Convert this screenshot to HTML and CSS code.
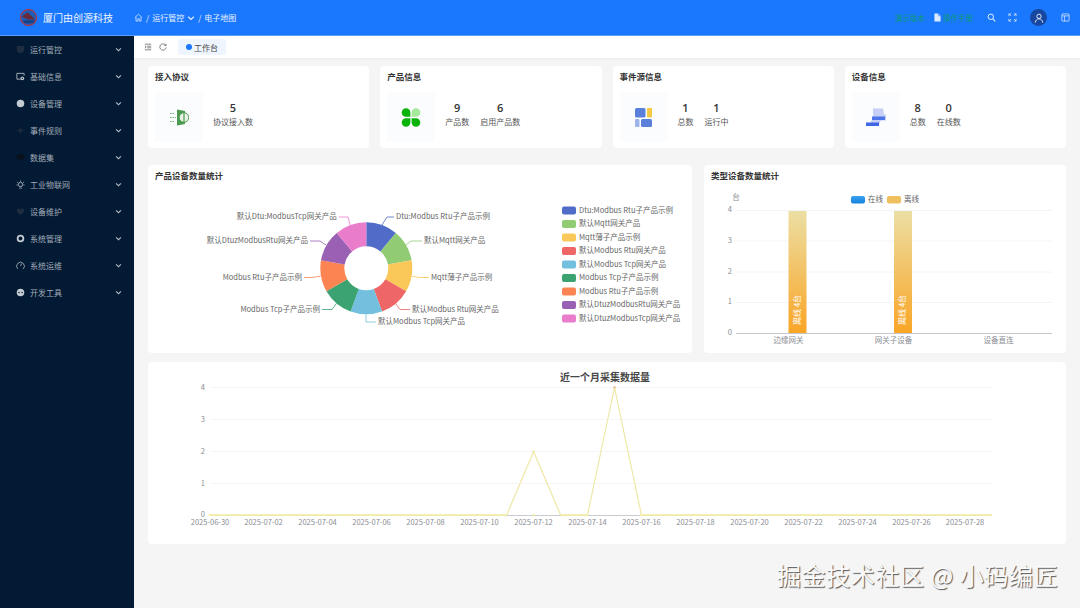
FILE: index.html
```html
<!DOCTYPE html>
<html lang="zh-CN">
<head>
    <meta charset="UTF-8">
    <meta name="viewport" content="width=device-width, initial-scale=1.0">
    <title>工作台</title>
    <link rel="stylesheet" href="styles.css">
</head>
<body>

<svg class="sprites" width="0" height="0">
    <symbol id="chevron" viewBox="0 0 8 8"><path d="M1.2 2.8 4 5.4l2.8-2.6" fill="none" stroke="currentColor" stroke-width="1.2"/></symbol>
</svg>

<header class="topbar">
    <div class="brand">
        <svg class="logo" viewBox="0 0 20 20">
            <circle cx="10" cy="10" r="8.4" fill="#1c5fb8" stroke="#a5394f" stroke-width="1.4"/>
            <path d="M3 9 9 4.5l8 7.5H9z" fill="#6b2a3a"/>
            <path d="M4 13h13l-2 3H6z" fill="#16418a"/>
        </svg>
        <span class="brand-name">厦门由创源科技</span>
    </div>
    <nav class="crumbs">
        <svg class="crumb-home" viewBox="0 0 10 10"><path d="M1 5 5 1.4 9 5M2.2 4.4V9h2V6.4h1.6V9h2V4.4" fill="none" stroke="currentColor" stroke-width=".8"/></svg>
        <span>/</span>
        <span>运行管控</span>
        <svg class="crumb-arrow"><use href="#chevron"/></svg>
        <span>/</span>
        <span>电子地图</span>
    </nav>
    <div class="top-tools">
        <span class="top-link version">演示版本</span>
        <span class="manual">
            <svg class="tool-doc" viewBox="0 0 8 10"><path d="M.5.5h4.5l2.5 2.5v6.500h-7z" fill="#dcebff"/><path d="M5 .5v2.500h2.500" fill="none" stroke="#1a78ff" stroke-width=".7"/></svg>
            <span class="top-link">操作手册</span>
        </span>
        <svg class="tool-icon tool-search" viewBox="0 0 10 10"><circle cx="4.200" cy="4.200" r="3" fill="none" stroke="currentColor" stroke-width="1.100"/><path d="m6.500 6.500 2.700 2.700" stroke="currentColor" stroke-width="1.200"/></svg>
        <svg class="tool-icon tool-full" viewBox="0 0 10 10"><path d="M1 3.500V1h2.500M6.500 1H9v2.500M9 6.500V9H6.500M3.500 9H1V6.500M1 1l2.200 2.200M9 1 6.800 3.200M9 9 6.800 6.800M1 9l2.200-2.200" fill="none" stroke="currentColor" stroke-width=".8"/></svg>
        <span class="avatar">
            <svg viewBox="0 0 12 12"><circle cx="6" cy="4" r="2.600" fill="none" stroke="#fff" stroke-width="1"/><path d="M1.500 11.500C2 8.500 3.800 7 6 7s4 1.500 4.500 4.500" fill="none" stroke="#fff" stroke-width="1"/></svg>
        </span>
        <svg class="tool-icon tool-layout" viewBox="0 0 10 10"><rect x="1" y="1" width="8" height="8" rx="1" fill="none" stroke="currentColor" stroke-width=".8"/><path d="M1 3.200h8M4 3.200V9" stroke="currentColor" stroke-width=".8"/></svg>
    </div>
</header>

<div class="layout">
    <aside class="sidebar">
        <a class="menu-item">
            <svg class="menu-icon dim" viewBox="0 0 10 10"><path d="M1 1h8v6L5 9.500 1 7z" fill="currentColor"/></svg>
            <span>运行管控</span><svg class="menu-arrow"><use href="#chevron"/></svg>
        </a>
        <a class="menu-item">
            <svg class="menu-icon" viewBox="0 0 10 10"><path d="M5 8H1V1.500h8V4" fill="none" stroke="currentColor" stroke-width=".9"/><circle cx="7" cy="7" r="2.100" fill="currentColor"/><circle cx="7" cy="7" r=".8" fill="#021a33"/></svg>
            <span>基础信息</span><svg class="menu-arrow"><use href="#chevron"/></svg>
        </a>
        <a class="menu-item">
            <svg class="menu-icon" viewBox="0 0 10 10"><circle cx="5" cy="5" r="4.200" fill="currentColor"/></svg>
            <span>设备管理</span><svg class="menu-arrow"><use href="#chevron"/></svg>
        </a>
        <a class="menu-item">
            <svg class="menu-icon dim" viewBox="0 0 10 10"><path d="m5 .5 1 3.500 3.500 1-3.500 1L5 9.500 4 6 .5 5 4 4z" fill="currentColor"/></svg>
            <span>事件规则</span><svg class="menu-arrow"><use href="#chevron"/></svg>
        </a>
        <a class="menu-item">
            <svg class="menu-icon darker" viewBox="0 0 10 10"><ellipse cx="5" cy="4.500" rx="4.500" ry="3" fill="currentColor"/></svg>
            <span>数据集</span><svg class="menu-arrow"><use href="#chevron"/></svg>
        </a>
        <a class="menu-item">
            <svg class="menu-icon" viewBox="0 0 10 10"><circle cx="5" cy="5" r="2.400" fill="none" stroke="currentColor" stroke-width=".9"/><path d="M5 .5v1.300M1 2l1.100 1M9 2 7.900 3M.5 5.500h1.300M8.200 5.500h1.300M3.500 9h3" stroke="currentColor" stroke-width=".8"/></svg>
            <span>工业物联网</span><svg class="menu-arrow"><use href="#chevron"/></svg>
        </a>
        <a class="menu-item">
            <svg class="menu-icon dim" viewBox="0 0 10 10"><path d="M1 3.500C1 1.500 4 1 5 3c1-2 4-1.500 4 .5C9 6 6.500 8 5 9 3.500 8 1 6 1 3.500z" fill="currentColor"/></svg>
            <span>设备维护</span><svg class="menu-arrow"><use href="#chevron"/></svg>
        </a>
        <a class="menu-item">
            <svg class="menu-icon" viewBox="0 0 10 10"><circle cx="5" cy="5" r="3.200" fill="none" stroke="currentColor" stroke-width="2"/></svg>
            <span>系统管理</span><svg class="menu-arrow"><use href="#chevron"/></svg>
        </a>
        <a class="menu-item">
            <svg class="menu-icon" viewBox="0 0 10 10"><path d="M2 8.800a4.300 4.300 0 1 1 6 0M5 5.500l1.200-2.500" fill="none" stroke="currentColor" stroke-width=".8"/></svg>
            <span>系统运维</span><svg class="menu-arrow"><use href="#chevron"/></svg>
        </a>
        <a class="menu-item">
            <svg class="menu-icon" viewBox="0 0 10 10"><circle cx="5" cy="5" r="4.200" fill="currentColor"/><circle cx="3.300" cy="5" r=".8" fill="#021a33"/><circle cx="6.700" cy="5" r=".8" fill="#021a33"/></svg>
            <span>开发工具</span><svg class="menu-arrow"><use href="#chevron"/></svg>
        </a>
    </aside>

    <main class="workspace">
        <div class="tabbar">
            <svg class="tab-tool" viewBox="0 0 10 10"><path d="M1 1.500h8M4 4h5M4 6h5M1 8.500h8M1 3.500 2.800 5 1 6.500" fill="none" stroke="#444" stroke-width=".8"/></svg>
            <svg class="tab-tool" viewBox="0 0 10 10"><path d="M8.500 3A4 4 0 1 0 9 5.500M8.800 1v2.200H6.600" fill="none" stroke="#444" stroke-width=".8"/></svg>
            <div class="tab"><i class="tab-dot"></i>工作台</div>
        </div>

        <div class="content">
            <section class="stat-row">
                <div class="card">
                    <div class="card-title">接入协议</div>
                    <div class="stat-body">
                        <div class="tile">
                            <svg class="tile-icon" viewBox="0 0 20 18">
                                <path d="M8 1l8 1.500v13L8 17z" fill="#4b9a4f"/>
                                <circle cx="15" cy="9" r="4.800" fill="#e8f3e6" stroke="#4b9a4f" stroke-width="1"/>
                                <path d="M15 4.500v9" stroke="#4b9a4f" stroke-width="1.200"/>
                                <path d="M1 5h5M1 9h6M1 13h5" stroke="#6fb573" stroke-width="1" stroke-dasharray="1.500 1"/>
                            </svg>
                        </div>
                        <div class="stat"><b>5</b><span>协议接入数</span></div>
                    </div>
                </div>
                <div class="card">
                    <div class="card-title">产品信息</div>
                    <div class="stat-body">
                        <div class="tile">
                            <svg class="tile-icon" viewBox="0 0 18 18">
                                <path d="M8.400 8.400H4.200a4.100 4.100 0 1 1 4.200-4.200z" fill="#0ab30a"/>
                                <path d="M9.600 8.400h4.200a4.100 4.100 0 1 0-4.200-4.200z" fill="#a6e89c"/>
                                <path d="M8.400 9.600H4.200a4.100 4.100 0 1 0 4.200 4.200z" fill="#0ab30a"/>
                                <path d="M9.600 9.600h4.200a4.100 4.100 0 1 1-4.200 4.200z" fill="#0ab30a"/>
                            </svg>
                        </div>
                        <div class="stat"><b>9</b><span>产品数</span></div>
                        <div class="stat"><b>6</b><span>启用产品数</span></div>
                    </div>
                </div>
                <div class="card">
                    <div class="card-title">事件源信息</div>
                    <div class="stat-body">
                        <div class="tile">
                            <svg class="tile-icon" viewBox="0 0 18 19">
                                <rect x="0" y="0" width="10.500" height="9.500" rx="1.500" fill="#5b80dc"/>
                                <rect x="12" y="0" width="5" height="9.500" rx="1" fill="#f6c945"/>
                                <rect x="0" y="11" width="4.500" height="8" rx="1" fill="#9db5ec"/>
                                <rect x="6" y="11" width="11" height="8" rx="1.500" fill="#5b80dc"/>
                            </svg>
                        </div>
                        <div class="stat"><b>1</b><span>总数</span></div>
                        <div class="stat"><b>1</b><span>运行中</span></div>
                    </div>
                </div>
                <div class="card">
                    <div class="card-title">设备信息</div>
                    <div class="stat-body">
                        <div class="tile">
                            <svg class="tile-icon" viewBox="0 0 20 18">
                                <path d="M7 0h10l1 6h2v6H15l-2 4H4l3-8z" fill="#c6cff6"/>
                                <rect x="6" y="8" width="13" height="3.500" fill="#4d74e8"/>
                                <rect x="0" y="14" width="13" height="3.500" fill="#3f66e6"/>
                            </svg>
                        </div>
                        <div class="stat"><b>8</b><span>总数</span></div>
                        <div class="stat"><b>0</b><span>在线数</span></div>
                    </div>
                </div>
            </section>

            <section class="chart-row">
                <div class="card">
                    <div class="card-title">产品设备数量统计</div>
                    <svg class="chart" viewBox="148 187 544 166">
                        <g transform="rotate(-90 366.300 268.300)" fill="none" stroke-width="24">
                            <circle cx="366.300" cy="268.300" r="34" pathLength="360" stroke-dasharray="40 320" stroke-dashoffset="0" stroke="#516bc8"/>
                            <circle cx="366.300" cy="268.300" r="34" pathLength="360" stroke-dasharray="40 320" stroke-dashoffset="-40" stroke="#91cc75"/>
                            <circle cx="366.300" cy="268.300" r="34" pathLength="360" stroke-dasharray="40 320" stroke-dashoffset="-80" stroke="#fac858"/>
                            <circle cx="366.300" cy="268.300" r="34" pathLength="360" stroke-dasharray="40 320" stroke-dashoffset="-120" stroke="#ee6666"/>
                            <circle cx="366.300" cy="268.300" r="34" pathLength="360" stroke-dasharray="40 320" stroke-dashoffset="-160" stroke="#73c0de"/>
                            <circle cx="366.300" cy="268.300" r="34" pathLength="360" stroke-dasharray="40 320" stroke-dashoffset="-200" stroke="#3ba272"/>
                            <circle cx="366.300" cy="268.300" r="34" pathLength="360" stroke-dasharray="40 320" stroke-dashoffset="-240" stroke="#fc8452"/>
                            <circle cx="366.300" cy="268.300" r="34" pathLength="360" stroke-dasharray="40 320" stroke-dashoffset="-280" stroke="#9a60b4"/>
                            <circle cx="366.300" cy="268.300" r="34" pathLength="360" stroke-dasharray="40 320" stroke-dashoffset="-320" stroke="#ea7ccc"/>
                        </g>
                        <g fill="none" stroke-width=".8">
                            <path d="M382 225l5-8h7" stroke="#516bc8"/>
                            <path d="M406 245l5-4h11" stroke="#91cc75"/>
                            <path d="M411.500 276l8.500 1.500h9" stroke="#fac858"/>
                            <path d="M395.600 303.500l4.400 6h10" stroke="#ee6666"/>
                            <path d="M366 314v8h10" stroke="#73c0de"/>
                            <path d="M336.400 303.500l-4.400 6h-10" stroke="#3ba272"/>
                            <path d="M320.700 276l-8.700 1.500h-8" stroke="#fc8452"/>
                            <path d="M326 245l-6-4h-10" stroke="#9a60b4"/>
                            <path d="M350 225l-2-8h-9" stroke="#ea7ccc"/>
                        </g>
                        <g class="pie-label">
                            <text x="396" y="217">Dtu:Modbus Rtu子产品示例</text>
                            <text x="424" y="241">默认Mqtt网关产品</text>
                            <text x="431" y="277.500">Mqtt薄子产品示例</text>
                            <text x="412" y="309.500">默认Modbus Rtu网关产品</text>
                            <text x="378" y="322">默认Modbus Tcp网关产品</text>
                        </g>
                        <g class="pie-label end">
                            <text x="320" y="309.500">Modbus Tcp子产品示例</text>
                            <text x="302" y="277.500">Modbus Rtu子产品示例</text>
                            <text x="308" y="241">默认DtuzModbusRtu网关产品</text>
                            <text x="336.700" y="217">默认Dtu:ModbusTcp网关产品</text>
                        </g>
                        <g>
                            <rect x="562" y="206.500" width="14" height="8" rx="2" fill="#516bc8"/>
                            <rect x="562" y="220" width="14" height="8" rx="2" fill="#91cc75"/>
                            <rect x="562" y="233.500" width="14" height="8" rx="2" fill="#fac858"/>
                            <rect x="562" y="247" width="14" height="8" rx="2" fill="#ee6666"/>
                            <rect x="562" y="260.500" width="14" height="8" rx="2" fill="#73c0de"/>
                            <rect x="562" y="274" width="14" height="8" rx="2" fill="#3ba272"/>
                            <rect x="562" y="287.500" width="14" height="8" rx="2" fill="#fc8452"/>
                            <rect x="562" y="301" width="14" height="8" rx="2" fill="#9a60b4"/>
                            <rect x="562" y="314.500" width="14" height="8" rx="2" fill="#ea7ccc"/>
                        </g>
                        <g class="pie-label legend">
                            <text x="579" y="210.500">Dtu:Modbus Rtu子产品示例</text>
                            <text x="579" y="224">默认Mqtt网关产品</text>
                            <text x="579" y="237.500">Mqtt薄子产品示例</text>
                            <text x="579" y="251">默认Modbus Rtu网关产品</text>
                            <text x="579" y="264.500">默认Modbus Tcp网关产品</text>
                            <text x="579" y="278">Modbus Tcp子产品示例</text>
                            <text x="579" y="291.500">Modbus Rtu子产品示例</text>
                            <text x="579" y="305">默认DtuzModbusRtu网关产品</text>
                            <text x="579" y="318.500">默认DtuzModbusTcp网关产品</text>
                        </g>
                    </svg>
                </div>
                <div class="card">
                    <div class="card-title">类型设备数量统计</div>
                    <svg class="chart" viewBox="704 187 362 166">
                        <defs>
                            <linearGradient id="barFill" x1="0" y1="0" x2="0" y2="1">
                                <stop offset="0" stop-color="#ecdfa4"/>
                                <stop offset="1" stop-color="#f9a526"/>
                            </linearGradient>
                            <linearGradient id="onlineFill" x1="0" y1="0" x2="0" y2="1">
                                <stop offset="0" stop-color="#3aa0f0"/>
                                <stop offset="1" stop-color="#1583e0"/>
                            </linearGradient>
                        </defs>
                        <g stroke="#eef1f4" stroke-width=".8">
                            <path d="M736 210.500h316M736 241h316M736 272h316M736 302.500h316"/>
                        </g>
                        <rect x="788.500" y="211" width="18" height="122" fill="url(#barFill)"/>
                        <rect x="894" y="211" width="18" height="122" fill="url(#barFill)"/>
                        <path d="M736 333.500h316" stroke="#b5b8bd" stroke-width=".8"/>
                        <g class="axis-label end">
                            <text x="732" y="210">4</text>
                            <text x="732" y="241">3</text>
                            <text x="732" y="272">2</text>
                            <text x="732" y="302">1</text>
                            <text x="732" y="333">0</text>
                        </g>
                        <g class="axis-label middle">
                            <text x="736" y="198">台</text>
                            <text x="788.500" y="341">边缘网关</text>
                            <text x="893.500" y="341">网关子设备</text>
                            <text x="998.500" y="341">设备直连</text>
                        </g>
                        <rect x="851" y="196" width="14" height="7.500" rx="2" fill="url(#onlineFill)"/>
                        <rect x="887" y="196" width="14" height="7.500" rx="2" fill="#f0c060"/>
                        <g class="pie-label">
                            <text x="868" y="199.500">在线</text>
                            <text x="904" y="199.500">离线</text>
                        </g>
                        <text class="bar-label" transform="translate(797.500 310) rotate(-90)">离线 4台</text>
                        <text class="bar-label" transform="translate(903 310) rotate(-90)">离线 4台</text>
                    </svg>
                </div>
            </section>

            <section class="card trend-card">
                <svg class="chart" viewBox="148 362 918 182">
                    <text class="trend-title" x="605" y="378.500">近一个月采集数据量</text>
                    <g stroke="#f1f2f4" stroke-width=".8">
                        <path d="M210 387.500h782M210 419.500h782M210 451.500h782M210 483.500h782"/>
                    </g>
                    <path d="M210 515.500h782" stroke="#b9bcc2" stroke-width=".8"/>
                    <polyline points="210,515 506.700,515 533.600,451.500 560.600,515 587.500,515 614.500,387.500 641.400,515 992,515" fill="none" stroke="#efe7a6" stroke-width="1.200" stroke-linejoin="round"/>
                    <path d="M210 515h296.700M641.400 515H992M560.600 515h26.900" stroke="#f3f0a8" stroke-width="1.600"/>
                    <path d="M210 515h782" stroke="#f3f0a8" stroke-width="2.600" stroke-linecap="round" stroke-dasharray="0 53.900"/>
                    <circle cx="533.600" cy="451.500" r="1.200" fill="#efe7a6"/>
                    <circle cx="614.500" cy="387.500" r="1.400" fill="#eec9a0"/>
                    <g class="axis-label end">
                        <text x="205" y="387.500">4</text>
                        <text x="205" y="419.500">3</text>
                        <text x="205" y="451.500">2</text>
                        <text x="205" y="483.500">1</text>
                        <text x="205" y="515">0</text>
                    </g>
                    <g class="axis-label middle">
                        <text x="210" y="522.800">2025-06-30</text>
                        <text x="263.500" y="522.800">2025-07-02</text>
                        <text x="317.500" y="522.800">2025-07-04</text>
                        <text x="371.500" y="522.800">2025-07-06</text>
                        <text x="425.500" y="522.800">2025-07-08</text>
                        <text x="479.500" y="522.800">2025-07-10</text>
                        <text x="533.500" y="522.800">2025-07-12</text>
                        <text x="587.500" y="522.800">2025-07-14</text>
                        <text x="641.500" y="522.800">2025-07-16</text>
                        <text x="695.500" y="522.800">2025-07-18</text>
                        <text x="749.500" y="522.800">2025-07-20</text>
                        <text x="803.500" y="522.800">2025-07-22</text>
                        <text x="857.500" y="522.800">2025-07-24</text>
                        <text x="911.500" y="522.800">2025-07-26</text>
                        <text x="965" y="522.800">2025-07-28</text>
                    </g>
                </svg>
            </section>
        </div>
    </main>
</div>

<div class="watermark">掘金技术社区 @ 小码编匠</div>

</body>
</html>
```

FILE: styles.css
```css
/* page */
* {
    box-sizing: border-box;
}
body {
    margin: 0;
    width: 1080px;
    height: 608px;
    overflow: hidden;
    position: relative;
    font-family: "Noto Sans CJK SC", "Noto Sans", sans-serif;
    font-size: 8px;
    color: #333;
    background-color: #f5f5f5;
}
.sprites {
    position: absolute;
}

/* top bar */
.topbar {
    height: 36px;
    display: flex;
    align-items: center;
    background-color: #1a78ff;
    border-bottom: 1px solid #5a9dff;
    color: #e6f0ff;
}
.brand {
    width: 134px;
    display: flex;
    align-items: center;
    padding-left: 19px;
    gap: 5px;
}
.logo {
    width: 19px;
    height: 19px;
    flex: none;
}
.brand-name {
    font-size: 10px;
    white-space: nowrap;
    color: #eef5ff;
}
.crumbs {
    display: flex;
    align-items: center;
    gap: 3px;
    font-size: 8px;
}
.crumb-home {
    width: 9px;
    height: 9px;
}
.crumb-arrow {
    width: 8px;
    height: 8px;
}
.top-tools {
    margin-left: auto;
    display: flex;
    align-items: center;
    padding-right: 10px;
}
.top-link {
    font-size: 7.5px;
    color: #0a9a72;
    white-space: nowrap;
}
.version {
    margin-right: 9px;
}
.manual {
    display: flex;
    align-items: center;
    gap: 2px;
    margin-right: 14px;
}
.tool-doc {
    width: 7px;
    height: 9px;
}
.tool-icon {
    width: 9px;
    height: 9px;
    color: #e6f0ff;
}
.tool-full {
    margin-left: 12px;
}
.avatar {
    width: 17px;
    height: 17px;
    margin-left: 13px;
    margin-right: 14px;
    border-radius: 50%;
    background-color: #17479e;
    display: flex;
    align-items: center;
    justify-content: center;
}
.avatar svg {
    width: 10px;
    height: 10px;
}

/* sidebar */
.layout {
    display: flex;
    height: 572px;
}
.sidebar {
    width: 134px;
    flex: none;
    background-color: #021a33;
    color: #a3adb9;
}
.menu-item {
    height: 27px;
    display: flex;
    align-items: center;
    padding: 0 12px 0 16px;
    gap: 5px;
}
.menu-icon {
    width: 9px;
    height: 9px;
    flex: none;
    color: #c3cad2;
}
.menu-icon.dim {
    color: #1e2e40;
}
.menu-icon.darker {
    color: #08111c;
}
.menu-arrow {
    width: 7px;
    height: 7px;
    margin-left: auto;
    color: #b4bcc6;
}

/* tabs */
.workspace {
    flex: 1;
    min-width: 0;
}
.tabbar {
    height: 22px;
    display: flex;
    align-items: center;
    padding-left: 10px;
    gap: 7px;
    background-color: #fff;
    box-shadow: 0 1px 2px rgba(0,0,0,0.05);
}
.tab-tool {
    width: 8px;
    height: 8px;
}
.tab {
    margin-left: 4px;
    width: 48px;
    height: 16px;
    display: flex;
    align-items: center;
    gap: 2px;
    padding-left: 8px;
    border-radius: 3px;
    background-color: #eef5fe;
    color: #444;
}
.tab-dot {
    width: 6px;
    height: 6px;
    border-radius: 50%;
    background-color: #1a78ff;
}

/* cards */
.content {
    padding: 8px 14px;
}
.card {
    background-color: #fff;
    border-radius: 4px;
    min-width: 0;
}
.card-title {
    height: 22px;
    line-height: 21px;
    padding-left: 7px;
    font-size: 8.5px;
    font-weight: 700;
    color: #333;
}
.stat-row {
    display: grid;
    grid-template-columns: repeat(4, 1fr);
    gap: 11px;
    height: 82px;
    margin-bottom: 17px;
}
.stat-body {
    display: flex;
    padding: 4px 7px 0;
    gap: 10px;
}
.tile {
    width: 48px;
    height: 50px;
    flex: none;
    margin-right: 0;
    display: flex;
    align-items: center;
    justify-content: center;
    background-color: #fafcfd;
}
.tile-icon {
    width: 20px;
    height: 19px;
}
.stat {
    display: flex;
    flex-direction: column;
    align-items: center;
    padding-top: 8px;
    margin-right: 1px;
}
.stat b {
    font-family: "Open Sans", "Noto Sans", sans-serif;
    font-size: 11px;
    font-weight: 600;
    line-height: 15px;
    color: #333;
}
.stat span {
    line-height: 13px;
    color: #555;
    white-space: nowrap;
}
.chart-row {
    display: grid;
    grid-template-columns: 544px 1fr;
    gap: 12px;
    height: 188px;
    margin-bottom: 9px;
}
.chart {
    display: block;
    width: 100%;
}
.chart-row .chart {
    height: 166px;
}
.trend-card {
    height: 182px;
}
.trend-card .chart {
    height: 182px;
}

/* chart text */
.pie-label text {
    font-size: 7.5px;
    fill: #666;
    dominant-baseline: middle;
}
.pie-label.end text {
    text-anchor: end;
}
.axis-label text {
    font-size: 7.5px;
    fill: #8a8d93;
    dominant-baseline: middle;
}
.axis-label.end text {
    text-anchor: end;
}
.axis-label.middle text {
    text-anchor: middle;
}
.bar-label {
    font-size: 8px;
    fill: #fff;
    text-anchor: middle;
    dominant-baseline: middle;
}
.trend-title {
    font-size: 10px;
    font-weight: 700;
    fill: #464646;
    text-anchor: middle;
    dominant-baseline: middle;
}

/* overlay */
.watermark {
    position: absolute;
    left: 777px;
    top: 557px;
    font-size: 24px;
    line-height: 36px;
    letter-spacing: .6px;
    white-space: nowrap;
    color: #fafafa;
    text-shadow: 1px 1px 1px #555;
}
```
